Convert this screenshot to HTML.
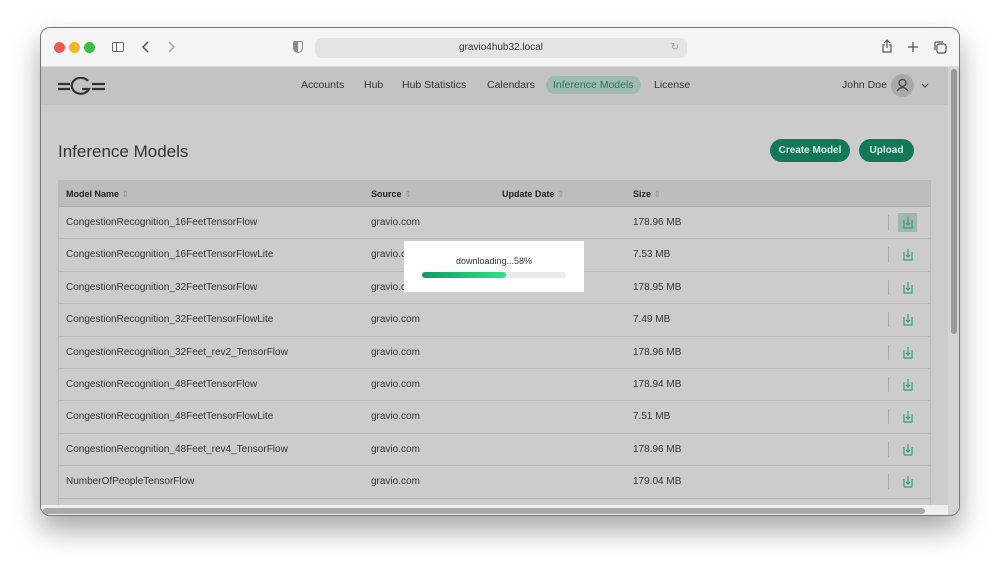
<!DOCTYPE html>
<html><head><meta charset="utf-8"><style>
*{margin:0;padding:0;box-sizing:border-box}
body{width:1000px;height:569px;background:#fff;font-family:"Liberation Sans",sans-serif;position:relative;overflow:hidden}
.win{position:absolute;left:40px;top:27px;width:920px;height:489px;border-radius:10px;overflow:hidden;box-shadow:0 14px 28px rgba(0,0,0,.35);border:1px solid #777;background:#ccc}
.tb{position:absolute;left:0;top:0;width:100%;height:39px;background:#f4f4f4;border-bottom:1px solid #ddd}
.dot{position:absolute;top:14px;width:11px;height:11px;border-radius:50%}
.url{position:absolute;left:274px;top:10px;width:372px;height:20px;background:#e4e4e4;border-radius:6px;font-size:10px;color:#333;text-align:center;line-height:20px}
.nav{position:absolute;left:0;top:39px;width:100%;height:38px;background:#c2c3c2}
.nav span{position:absolute;top:12px;font-size:10.5px;color:#333}
.act{background:#9fbab0;color:#1f7d62!important;border-radius:10px;padding:3px 7px;top:9px!important}
h1{position:absolute;left:17px;top:114px;font-size:17px;font-weight:normal;color:#333}
.btn{position:absolute;top:111px;height:23px;border-radius:12px;background:#13785a;color:#d8efe6;font-size:10px;font-weight:bold;line-height:23px;text-align:center}
.tbl{position:absolute;left:17px;top:152px;width:873px;height:340px;border:1px solid #bbb;border-bottom:none}
.th{height:26px;background:#bdbdbd;border-bottom:1px solid #aaa;position:relative;font-size:9px;font-weight:bold;color:#222}
.th span,.tr span{position:absolute;top:8px}
.th i{font-style:normal;color:#999;font-weight:normal}
.tr{height:32.4px;border-bottom:1px solid #b9b9b9;position:relative;font-size:10px;color:#333}
.tr span{top:10px}
.ic{position:absolute;left:844px;top:9px}
.sep{position:absolute;left:829px;top:8px;width:1px;height:15px;background:#aaa}
.modal{position:absolute;left:404px;top:241px;width:180px;height:51px;background:#fff}
</style></head><body>
<div class="win">
<div class="tb">
<div class="dot" style="left:13px;background:#ed5b55"></div><div class="dot" style="left:28px;background:#f4b42f"></div><div class="dot" style="left:43px;background:#33c246"></div>
<div style="position:absolute;left:71px;top:14px;width:12px;height:10px;border:1.3px solid #666;border-radius:2px"><div style="position:absolute;left:3px;top:0;width:1px;height:8px;background:#666"></div></div>
<svg style="position:absolute;left:100px;top:13px" width="10" height="12"><path d="M7 1L2 6L7 11" stroke="#555" stroke-width="1.5" fill="none"/></svg>
<svg style="position:absolute;left:125px;top:13px" width="10" height="12"><path d="M3 1L8 6L3 11" stroke="#aaa" stroke-width="1.5" fill="none"/></svg>
<div style="position:absolute;left:252px;top:13px;width:10px;height:12px;border:1.3px solid #888;border-radius:2px 2px 5px 5px;background:linear-gradient(90deg,#888 50%,transparent 50%)"></div>
<div class="url">gravio4hub32.local<span style="position:absolute;right:8px;color:#999">↻</span></div>
<svg style="position:absolute;left:840px;top:11px" width="12" height="15"><path d="M6 1V9M3 4L6 1L9 4M4 6H2V13H10V6H8" stroke="#555" stroke-width="1.2" fill="none"/></svg>
<svg style="position:absolute;left:866px;top:13px" width="12" height="12"><path d="M6 1V11M1 6H11" stroke="#555" stroke-width="1.3"/></svg>
<svg style="position:absolute;left:892px;top:12px" width="14" height="14"><rect x="4" y="4" width="9" height="9" rx="2" stroke="#555" stroke-width="1.2" fill="none"/><path d="M2 10V3A1 1 0 0 1 3 2H10" stroke="#555" stroke-width="1.2" fill="none"/></svg>
</div>
<div class="nav">
<svg style="position:absolute;left:17px;top:10px" width="48" height="19" viewBox="0 0 48 19"><g stroke="#333" stroke-width="2.2" fill="none"><path d="M0 7H12M0 12H12M34 7H47M34 12H47"/><path d="M30 4A9 8 0 1 0 31 12H24"/></g></svg>
<span style="left:260px">Accounts</span><span style="left:323px">Hub</span><span style="left:361px">Hub Statistics</span><span style="left:446px">Calendars</span>
<span class="act" style="left:505px">Inference Models</span><span style="left:613px">License</span>
<span style="left:801px">John Doe</span>
<div style="position:absolute;left:850px;top:7px;width:23px;height:23px;border-radius:50%;background:#a9a9a9"><svg width="23" height="23"><circle cx="11.5" cy="9" r="3.5" stroke="#444" stroke-width="1.3" fill="none"/><path d="M6 17Q11.5 10 17 17" stroke="#444" stroke-width="1.3" fill="none"/></svg></div>
<svg style="position:absolute;left:880px;top:16px" width="8" height="6"><path d="M1 1L4 4L7 1" stroke="#444" stroke-width="1.2" fill="none"/></svg>
</div>
<h1>Inference Models</h1>
<div class="btn" style="left:729px;width:80px">Create Model</div>
<div class="btn" style="left:818px;width:55px">Upload</div>
<div class="tbl">
<div class="th"><span style="left:7px">Model Name <i>⇕</i></span><span style="left:312px">Source <i>⇕</i></span><span style="left:443px">Update Date <i>⇕</i></span><span style="left:574px">Size <i>⇕</i></span></div>
<div class="tr"><span style="left:7px">CongestionRecognition_16FeetTensorFlow</span><span style="left:312px">gravio.com</span><span style="left:574px">178.96 MB</span><div class="sep"></div><div style="position:absolute;left:839px;top:6px;width:19px;height:19px;background:#9fb8ae"></div><svg class="ic" width="10" height="14"><path d="M1 4V12H9V4M5 1V9M3 7L5 9L7 7" stroke="#3b9c74" stroke-width="1.2" fill="none"/></svg></div>
<div class="tr"><span style="left:7px">CongestionRecognition_16FeetTensorFlowLite</span><span style="left:312px">gravio.com</span><span style="left:574px">7.53 MB</span><div class="sep"></div><svg class="ic" width="10" height="14"><path d="M1 4V12H9V4M5 1V9M3 7L5 9L7 7" stroke="#3b9c74" stroke-width="1.2" fill="none"/></svg></div>
<div class="tr"><span style="left:7px">CongestionRecognition_32FeetTensorFlow</span><span style="left:312px">gravio.com</span><span style="left:574px">178.95 MB</span><div class="sep"></div><svg class="ic" width="10" height="14"><path d="M1 4V12H9V4M5 1V9M3 7L5 9L7 7" stroke="#3b9c74" stroke-width="1.2" fill="none"/></svg></div>
<div class="tr"><span style="left:7px">CongestionRecognition_32FeetTensorFlowLite</span><span style="left:312px">gravio.com</span><span style="left:574px">7.49 MB</span><div class="sep"></div><svg class="ic" width="10" height="14"><path d="M1 4V12H9V4M5 1V9M3 7L5 9L7 7" stroke="#3b9c74" stroke-width="1.2" fill="none"/></svg></div>
<div class="tr"><span style="left:7px">CongestionRecognition_32Feet_rev2_TensorFlow</span><span style="left:312px">gravio.com</span><span style="left:574px">178.96 MB</span><div class="sep"></div><svg class="ic" width="10" height="14"><path d="M1 4V12H9V4M5 1V9M3 7L5 9L7 7" stroke="#3b9c74" stroke-width="1.2" fill="none"/></svg></div>
<div class="tr"><span style="left:7px">CongestionRecognition_48FeetTensorFlow</span><span style="left:312px">gravio.com</span><span style="left:574px">178.94 MB</span><div class="sep"></div><svg class="ic" width="10" height="14"><path d="M1 4V12H9V4M5 1V9M3 7L5 9L7 7" stroke="#3b9c74" stroke-width="1.2" fill="none"/></svg></div>
<div class="tr"><span style="left:7px">CongestionRecognition_48FeetTensorFlowLite</span><span style="left:312px">gravio.com</span><span style="left:574px">7.51 MB</span><div class="sep"></div><svg class="ic" width="10" height="14"><path d="M1 4V12H9V4M5 1V9M3 7L5 9L7 7" stroke="#3b9c74" stroke-width="1.2" fill="none"/></svg></div>
<div class="tr"><span style="left:7px">CongestionRecognition_48Feet_rev4_TensorFlow</span><span style="left:312px">gravio.com</span><span style="left:574px">178.96 MB</span><div class="sep"></div><svg class="ic" width="10" height="14"><path d="M1 4V12H9V4M5 1V9M3 7L5 9L7 7" stroke="#3b9c74" stroke-width="1.2" fill="none"/></svg></div>
<div class="tr"><span style="left:7px">NumberOfPeopleTensorFlow</span><span style="left:312px">gravio.com</span><span style="left:574px">179.04 MB</span><div class="sep"></div><svg class="ic" width="10" height="14"><path d="M1 4V12H9V4M5 1V9M3 7L5 9L7 7" stroke="#3b9c74" stroke-width="1.2" fill="none"/></svg></div>
</div>
<div style="position:absolute;left:907px;top:39px;width:13px;height:450px;background:#d4d4d4"><div style="margin:2px 3px;width:6px;height:265px;background:#999;border-radius:3px"></div></div>
<div style="position:absolute;left:0;top:477px;width:907px;height:12px;background:#eee"><div style="margin:3px 2px;width:882px;height:6px;background:#aaa;border-radius:3px"></div></div>
</div>
<div class="modal"><div style="text-align:center;font-size:9px;color:#333;margin-top:15px">downloading...58%</div>
<div style="position:absolute;left:18px;top:31px;width:144px;height:6px;border-radius:3px;background:#eaeaea"><div style="width:84px;height:6px;border-radius:3px;background:linear-gradient(90deg,#0f9a68,#2de47f)"></div></div></div>
</body></html>
